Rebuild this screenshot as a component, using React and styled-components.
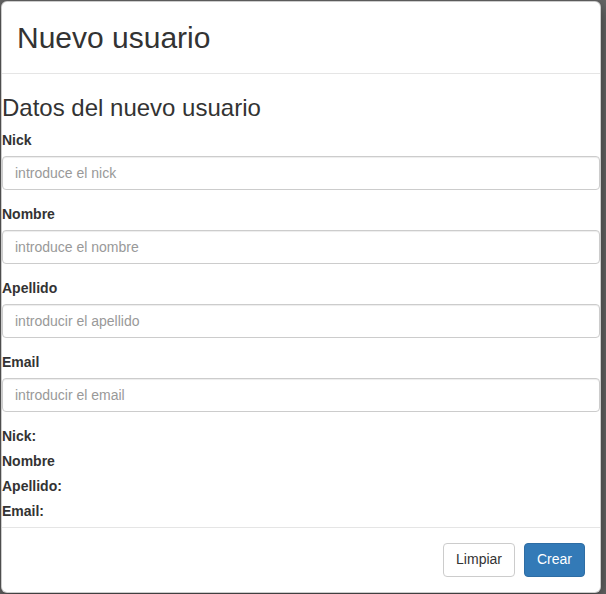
import React, { useState } from 'react';
import styled, { createGlobalStyle } from 'styled-components';

const GlobalStyle = createGlobalStyle`
  * { box-sizing: border-box; }
  html, body {
    margin: 0;
    background: #666;
    font-family: "Liberation Sans", Arial, sans-serif;
    font-size: 14px;
    line-height: 1.42857;
    color: #333;
  }
`

const Backdrop = styled.div`
  min-height: 594px;
  padding: 1px 0 0 1px;
`

const Dialog = styled.div`
  width: 600px;
  background: #fff;
  border: 1px solid rgba(0, 0, 0, 0.2);
  border-radius: 6px;
  box-shadow: 0 5px 15px rgba(0, 0, 0, 0.5);
`

const Header = styled.div`
  padding: 15px;
  border-bottom: 1px solid #e5e5e5;
`

const Title = styled.h4`
  margin: 0;
  font-size: 30px;
  font-weight: 400;
  line-height: 41px;
`

const Body = styled.form`
  padding: 0;
`

const Heading = styled.h3`
  margin: 20px 0 10px;
  font-size: 24px;
  font-weight: 400;
  line-height: 27px;
`

const Group = styled.div`
  margin-bottom: 15px;
`

const Label = styled.label`
  display: inline-block;
  max-width: 100%;
  margin-bottom: 5px;
  font-weight: 700;
`

const Input = styled.input`
  display: block;
  width: 100%;
  height: 34px;
  padding: 6px 12px;
  font-family: inherit;
  font-size: 14px;
  line-height: 1.42857;
  color: #555;
  background: #fff;
  border: 1px solid #ccc;
  border-radius: 4px;
  box-shadow: inset 0 1px 1px rgba(0, 0, 0, 0.075);
  outline: none;
  &::placeholder { color: #999; }
`

const Summary = styled.div``

const Footer = styled.div`
  padding: 15px;
  border-top: 1px solid #e5e5e5;
  display: flex;
  justify-content: flex-end;
  gap: 9px;
`

const Button = styled.button`
  display: inline-block;
  height: 34px;
  padding: 6px 12px;
  font-family: inherit;
  font-size: 14px;
  line-height: 1.42857;
  border-radius: 4px;
  cursor: pointer;
  color: ${p => (p.$primary ? '#fff' : '#333')};
  background: ${p => (p.$primary ? '#337ab7' : '#fff')};
  border: 1px solid ${p => (p.$primary ? '#2e6da4' : '#ccc')};
`

const fields = [
  { name: 'nick', label: 'Nick', placeholder: 'introduce el nick' },
  { name: 'nombre', label: 'Nombre', placeholder: 'introduce el nombre' },
  { name: 'apellido', label: 'Apellido', placeholder: 'introducir el apellido' },
  { name: 'email', label: 'Email', placeholder: 'introducir el email' },
]

const empty = { nick: '', nombre: '', apellido: '', email: '' }

export default function App() {
  const [values, setValues] = useState(empty)

  const onChange = evt => {
    const { name, value } = evt.target
    setValues({ ...values, [name]: value })
  }

  return (
    <>
      <GlobalStyle />
      <Backdrop>
        <Dialog>
          <Header>
            <Title>Nuevo usuario</Title>
          </Header>
          <Body onSubmit={e => e.preventDefault()}>
            <Heading>Datos del nuevo usuario</Heading>
            {fields.map(f => (
              <Group key={f.name}>
                <Label htmlFor={f.name}>{f.label}</Label>
                <Input
                  id={f.name}
                  name={f.name}
                  type="text"
                  value={values[f.name]}
                  onChange={onChange}
                  placeholder={f.placeholder}
                />
              </Group>
            ))}
            <Summary>
              <div><Label>Nick: {values.nick}</Label></div>
              <div><Label>Nombre {values.nombre}</Label></div>
              <div><Label>Apellido: {values.apellido}</Label></div>
              <div><Label>Email: {values.email}</Label></div>
            </Summary>
          </Body>
          <Footer>
            <Button type="button" onClick={() => setValues(empty)}>Limpiar</Button>
            <Button type="button" $primary>Crear</Button>
          </Footer>
        </Dialog>
      </Backdrop>
    </>
  )
}
